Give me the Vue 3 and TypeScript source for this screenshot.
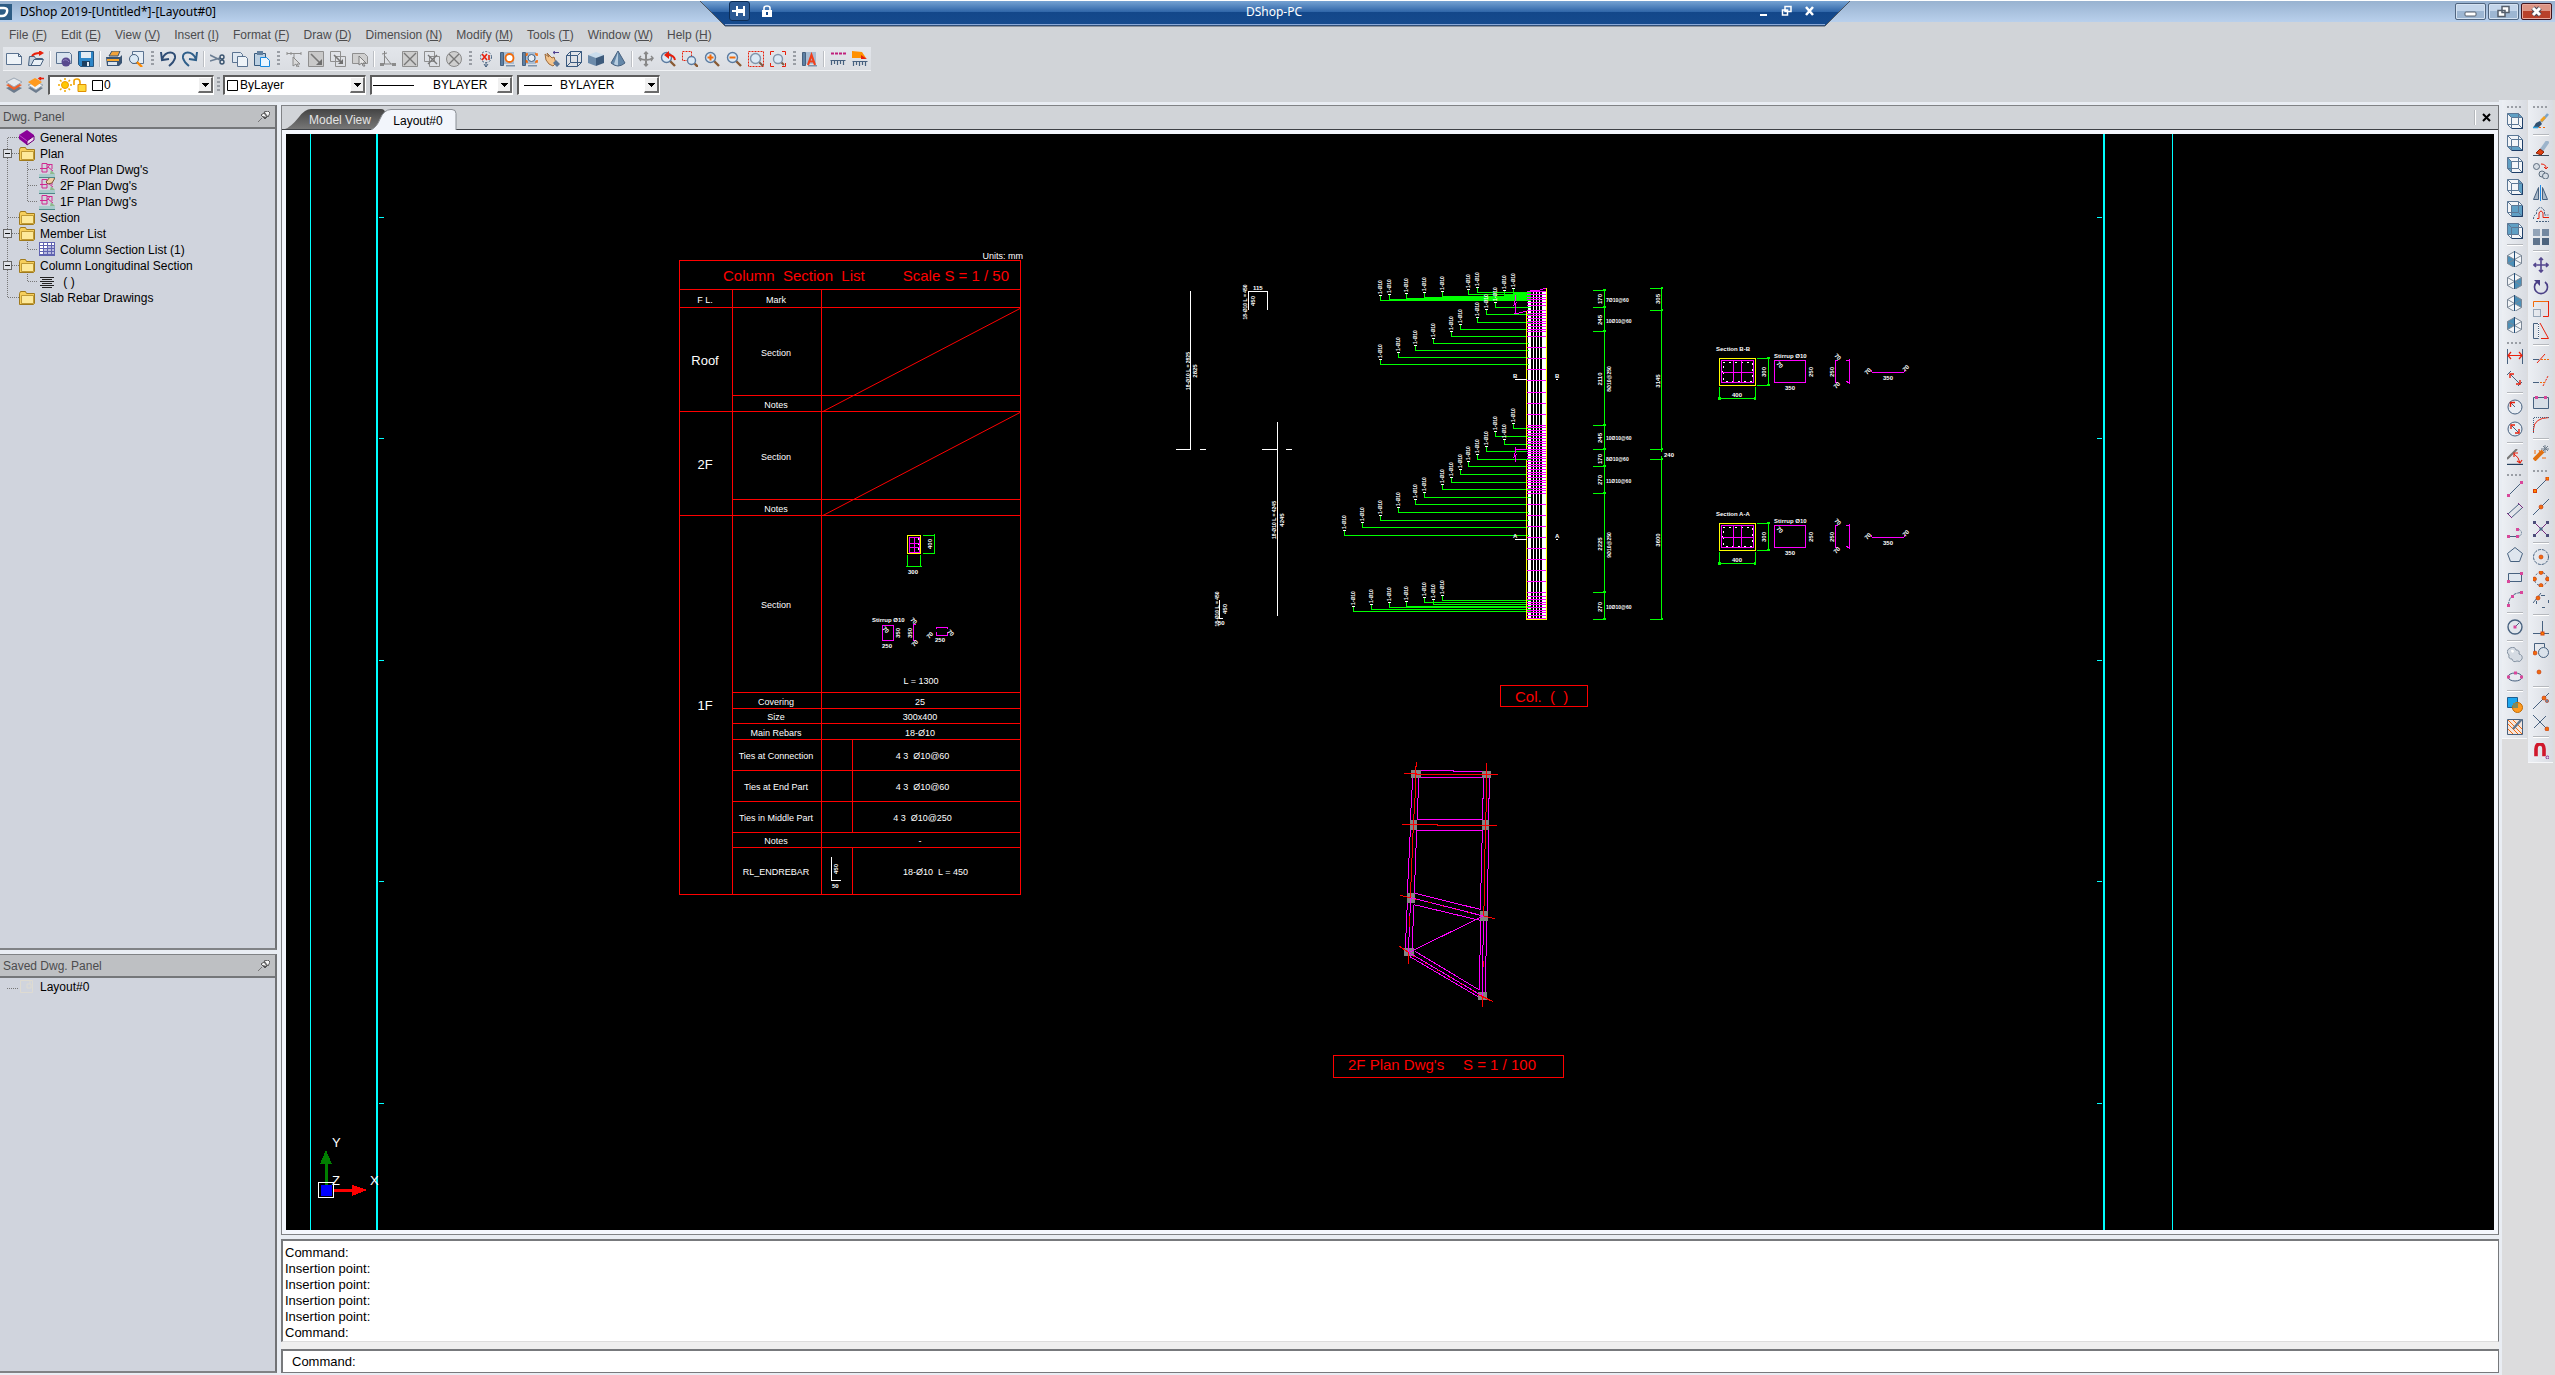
<script setup lang="ts">
interface Group { items: string[] }
interface TreeRow { label: string; icon: string; level: 0 | 1; open?: boolean; first?: boolean; last?: boolean; endOfBranch?: boolean }
interface Leader { x: number; y: number }

const steel = '#47617f'
const red = '#e8200c'
const orange = '#f26a0a'
const pink = '#d8479b'

const menus: [string, string][] = [
  ['File', 'F'], ['Edit', 'E'], ['View', 'V'], ['Insert', 'I'], ['Format', 'F'], ['Draw', 'D'],
  ['Dimension', 'N'], ['Modify', 'M'], ['Tools', 'T'], ['Window', 'W'], ['Help', 'H'],
]

const line = (d: string, c = steel, w = 1, extra = '') =>
  `<path d="${d}" fill="none" stroke="${c}" stroke-width="${w}" ${extra}/>`
const fill = (d: string, c: string, s = 'none') => `<path d="${d}" fill="${c}" stroke="${s}"/>`
const dot = (x: number, y: number, c = orange, r = 2) =>
  `<circle cx="${x}" cy="${y}" r="${r}" fill="${c}" stroke="#c33208" stroke-width=".6"/>`
const node = (x: number, y: number, c = pink) =>
  `<rect x="${x - 1.5}" y="${y - 1.5}" width="3" height="3" fill="${c}"/>`
const onode = (x: number, y: number) =>
  `<rect x="${x - 1.5}" y="${y - 1.5}" width="3" height="3" fill="#ff8a00" stroke="#d8400a"/>`

const cube = (face: string) =>
  fill('M.5.5h11l4 4v11h-11l-4-4z', '#f3f5f8') + fill(face, '#5f9fc4') +
  line('M.5.5h11v11h-11zM4.5 4.5h11v11h-11zM.5.5l4 4M11.5.5l4 4M11.5 11.5l4 4M.5 11.5l4 4', '#5c7896', 1) +
  line('M15.5 5v10.5H5', '#1e3e68')
const iso = (face: string) =>
  fill('M7.5.5l7 4v8l-7 4-7-4v-8z', '#f3f5f8') + fill(face, '#4c90b8') +
  line('M7.5.5l7 4v8l-7 4-7-4v-8zM.5 4.5l14 8M14.5 4.5l-14 8', '#7a8796') + line('M7.5 0v16', '#234e78')
const lens = (inner: string) =>
  line('M10 10l5 5', '#8a5a33', 2.4) + `<circle cx="6.5" cy="6.5" r="5" fill="#dbe9f5" stroke="#5b7ba0" stroke-width="1.4"/>` + inner
const sheet = (inner: string) =>
  fill('M.5 1.5h3v13h-3z', '#5d7fa3', '#47617f') + fill('M4 1h10v12H4z', '#a9bdd3') + fill('M6 14h9v1.500H6z', '#7d93ab') + inner

const icons: Record<string, string> = {
  new: fill('M.5 2.5h12l3 3v8H.5z', '#eef3f8', '#5b7391') + line('M12.5 2.5v3h3'),
  open: fill('M.5 14.5l1-9h5l1 2h7l-3 7z', '#c5d2e0', steel) + fill('M3 14.5l3-6h9.5l-3 6z', '#eaf0f6', steel) + line('M4 5c2-3 5-3 8-3', red, 2) + fill('M11-1l5 3-5 3z', red),
  cloud: fill('M.5 1.5h13l2 2v9H.5z', '#d9e4ef', '#5b7391') + `<circle cx="10" cy="11" r="4.5" fill="#5a4a8e"/>` + line('M7 10q3-3 6 1', '#9080c0'),
  save: fill('M.5.5h15v15h-13l-2-2z', '#2d86c8', '#27557f') + fill('M3 1h10v6H3z', '#e3ecf4') + fill('M4 10h8v5H4z', '#1c3e5f') + fill('M9 11h2v4H9z', '#e3ecf4'),
  print: fill('M3 5l3-5h8l-2 5z', '#f2a33a', '#37536f') + fill('M0 6h14l2-2v8l-3 3H1z', '#3a5473') + line('M1 9h12', '#f8a830', 2) + fill('M2 11h9v3H2z', '#d9e3ee'),
  preview: fill('M4.5.5h11v12h-11z', '#e5edf5', '#5b7391') + `<circle cx="6" cy="8" r="4.5" fill="#dbe9f5" stroke="#47617f"/>` + line('M9 11l5 5', '#ff8a00', 2.4),
  undo: line('M1 1l1 8 7-1M2 8C6-1 16 0 15 7q-1 4-6 8', '#2f4d75', 2),
  redo: line('M15 1l-1 8-7-1M14 8C10-1 0 0 1 7q1 4 6 8', '#2f5f8a', 2),
  cut: line('M0 4l10 5M0 10l10-3', '#6c7f95', 1.6) + line('M10 6a2 2 0 104 0 2 2 0 10-4 0M10 11a2 2 0 104 0 2 2 0 10-4 0', '#39536f', 1.4),
  copy: fill('M.5 1.5h8l2 2v8H.5z', '#dfe8f1', '#5b7391') + fill('M5.5 5.5h8l2 2v8h-10z', '#eef3f8', '#5b7391'),
  paste: fill('M.5 2.5h11v12H.5z', '#bcd0e2', '#37597c') + fill('M3 0h6v4H3z', '#62809f') + fill('M6.5 6.5h6l3 3v6h-9z', '#eaf5ff', '#1688e0'),
  gA: line('M1 2.5h14M8 2v6M1 1v3M5 1v3M15 1v3', '#8f8f8f') + fill('M7 6l7 7-3 0 2 3-2 0-1-3-3 2z', '#d9d9d9', '#8a8a8a'),
  gB: fill('M.5.5h15v15H.5z', '#c9c9c9', '#8f8f8f') + line('M3 3l9 9', '#777', 1.6) + fill('M14 14H8l6-6z', '#6f6f6f'),
  gC: line('M.5.5h10v10H.5zM5.5 5.5h10v10h-10z', '#8f8f8f') + line('M4 4l7 7', '#777', 1.6) + fill('M13 13H8l5-5z', '#6f6f6f'),
  gD: fill('M.5 2.5h12l3 3v7H.5z', '#cfcfcf', '#8f8f8f') + fill('M7 5l7 7-3 0 2 3-2 0-1-3-3 2z', '#e6e6e6', '#7d7d7d'),
  gE: line('M4.5 0v13M2 13h13M4 4l7 9M2 3l5-1', '#858585') + fill('M0 12h4v3H0zM12 12h4v3h-4z', '#8b8b8b'),
  gF: fill('M.5.5h15v15H.5z', '#cdcdcd', '#8f8f8f') + line('M2 2l12 12M14 2L2 14', '#777', 1.4),
  gG: line('M.5.5h10v10H.5zM5.5 5.5h10v10h-10z', '#8f8f8f') + line('M4 4l9 9M13 4l-9 9', '#777', 1.4),
  gH: `<circle cx="8" cy="8" r="7.5" fill="#cfcfcf" stroke="#8a8a8a"/>` + line('M3 3l10 10M13 3L3 13', '#777', 1.4),
  x1: `<circle cx="8" cy="6" r="5.5" fill="none" stroke="#47617f" stroke-dasharray="2 1.5"/>` + line('M8 11v5M6 13l2 3 2-3') + line('M4 3l5 6M9 3L4 9M11 4v5', red, 1.6),
  v1: sheet(`<circle cx="9.5" cy="7" r="4" fill="#fff" stroke="${orange}" stroke-width="1.8"/>`),
  v2: sheet(`<circle cx="9.5" cy="7" r="3.5" fill="#e8eef5" stroke="#47617f"/>` + line('M6 3H4.500v2M13 3h2v2M6 11H4.500V9M13 11h2V9', orange, 1.6)),
  hand: fill('M1 3l4 3-2-4 5 5 2-1 2 6-3 3-4-2-3-4z', '#f4c58e', '#9c6a3c') + fill('M9 12l3-3 4 4-3 3z', '#5a7596') + line('M15 1.5H9M11 0L9 1.5 11 3', '#4f3f8f'),
  box: line('M.5 4.5h11v11H.5zM4.5.5h11v11h-11zM.5 4.5l4-4M11.5 4.5l4-4M11.5 15.5l4-4M.5 15.5l4-4', '#39597f'),
  solid: fill('M0 4l8-3 8 3-8 3z', '#c9dcec') + fill('M0 4l8 3v8l-8-3z', '#6c8bab') + fill('M16 4l-8 3v8l8-3z', '#3e5b7c'),
  cone: fill('M8 0l7 12q-7 6-14 0z', '#6487a8', '#47617f') + fill('M8 1L4 13q3 2 4 1z', '#b7cde0'),
  orbit: line('M8 1v14M1 7q7 4 14 0', '#888', 2) + line('M6 3l2-2 2 2M6 13l2 2 2-2M3 5L1 7l2 3M13 5l2 2-2 3', '#888', 1.4),
  zPrev: lens('') + line('M15 9Q14 4 8 4', red, 2) + fill('M4 4l5-4v8z', red),
  zWin: line('M.5.5h9v9h-9z', red, 1, 'stroke-dasharray="2 1"') + line('M12 12l4 4', '#8a5a33', 2.4) + `<circle cx="9.5" cy="9.5" r="4" fill="#dbe9f5" stroke="#5b7ba0" stroke-width="1.4"/>`,
  zIn: lens(line('M3.5 6.5h6M6.5 3.5v6', orange, 2)),
  zOut: lens(line('M3.5 6.5h6', orange, 2)),
  zSel: line('M.5.5h15v15H.5z', red, 1, 'stroke-dasharray="2 1"') + line('M11 11l4 4', '#7a5a43', 2) + `<circle cx="7.5" cy="7.5" r="5" fill="#dbe9f5" stroke="#8095ab" stroke-width="1.4"/>`,
  zAll: line('M.5 4V.5H4M12 .5h3.5V4M15.5 12v3.5H12M4 15.5H.5V12', red) + line('M11 11l3 3', '#7a5a43', 2) + `<circle cx="8" cy="8" r="4.5" fill="#dbe9f5" stroke="#8095ab" stroke-width="1.4"/>`,
  txt: sheet(line('M6 14L9.5 4 13 14M7 10.5h5', '#f0401c', 2.2)),
  dist: line('M1 2.5h15', '#c0207c', 2, 'stroke-dasharray="3 1"') + line('M.5 9.5h15M1.5 9v5M4.5 9v4M7.5 9v5M10.5 9v4M13.5 9v5', steel, 1.2),
  area: fill('M0 0l10 1 4 6H0z', '#ff9100') + fill('M9 4l6 4H9z', red) + line('M.5 10.5h15M1.5 10v5M4.5 10v4M7.5 10v5M10.5 10v4M13.5 10v5', steel, 1.2),
  layers: fill('M0 11l8-3 8 3-8 5z', '#6c7b8d') + fill('M0 8l8-3 8 3-8 5z', '#f0602a') + fill('M0 5l8-4 8 4-8 5z', '#e5e9ee', '#9aa6b3'),
  layers2: fill('M0 11l8-3 7 3-7 5z', '#6c7b8d') + fill('M0 8l8-3 7 3-7 5z', '#f2f4f6', '#9aa6b3') + fill('M0 5l7-4 7 4-7 5z', '#ff9a1e') + line('M16 1.5h-5M13 0l-2 1.5L13 3', red, 1.4),
  brush: line('M15 1L8 9', '#7ca4c8', 2.6) + line('M12 4L8 8', '#f0a020', 2.6) + fill('M3 10l4-2 2 3-4 4-5 0z', '#31506f') + line('M0 14.5h5', '#2f9fd8', 1.6) + line('M6 14.5h8', orange, 1, 'stroke-dasharray="2 2"'),
  erase: line('M15 0L8 10', '#9db4cb', 4) + fill('M3 12l4-4 4 3-3 3z', '#e04010', '#8a2408') + line('M0 14.5h16', '#3b4b5c'),
  copyObj: `<circle cx="3.5" cy="3.5" r="3" fill="#d5dce4" stroke="#5d6d7e"/><circle cx="9" cy="11" r="3" fill="#d5dce4" stroke="#5d6d7e"/><circle cx="12.5" cy="13" r="3" fill="#d5dce4" stroke="#5d6d7e"/>` + line('M8 1q5 0 5 4M11 4l2 2 2-2', red),
  mirror: fill('M5.5 2.5v12h-5z', '#aab9c9', steel) + fill('M9.5 2.5v12h5z', '#aab9c9', steel) + line('M7.5 0v16', '#1e8ce8'),
  offset: line('M4 11.5h2V6q2-4 4 0v4.5h6', red) + line('M.5 12q0-4 3-5V4q4-7 8 0v4h4M3 14.5h13', steel, 1, 'stroke-dasharray="2 1"'),
  array: fill('M0 0h7v7H0z', '#93a4b8') + fill('M9 0h7v7H9z', '#7488a0') + fill('M0 9h7v7H0z', '#60758e') + fill('M9 9h7v7H9z', '#4d637d'),
  move: line('M8 1v14M1 8h14M6 3l2-2 2 2M6 13l2 2 2-2M3 6L1 8l2 2M13 6l2 2-2 2', '#54478e', 1.6),
  rotate: line('M4 3a6.5 6.5 0 108 0', '#4a3f86', 1.6) + fill('M1 1h6v6z', '#4a3f86'),
  scale: fill('M8 8V1h7v14h-6V8z', '#e4e0e4') + line('M.5 6V.5h15', orange) + line('M15.500 0v15.5H10', red) + line('M.5 8.5h7v7h-7z', steel, 1, 'stroke-dasharray="1 1"'),
  stretch: line('M.5.5h5v15h-5z', steel) + line('M7 0l8.5 15.5H8', red) + line('M5.5 0v16', '#fff', 1, 'stroke-dasharray="1 1"'),
  trim: line('M4 12L12 3', red) + line('M0 8.5h6', steel) + line('M8 8.5h8', orange, 1, 'stroke-dasharray="2 1"'),
  extend: line('M10 13l5-10', red, 1, 'stroke-dasharray="2 1"') + line('M0 9.5h6', steel) + line('M7 9.5h5', orange, 1, 'stroke-dasharray="2 1"'),
  brk: fill('M.5 2.5h15v11H.5z', '#d7dee7', steel) + node(3.5, 2.5) + node(12.5, 2.5),
  fillet: line('M.5 16V12Q1 1 16 .5', red) + line('M.5 16V1M1 .5h15', steel, 1, 'stroke-dasharray="1 1"'),
  explode: line('M1 15L10 6', '#e07010', 4) + line('M12 0v8M8 4h8M10 1l5 5M15 1l-5 5', '#6e7c8c') + line('M2 5v4M9 13h4M6 5l1 2', orange),
  dLin: line('M.5 0v15M15.5 0v15', steel) + line('M1 6.5h14M4 3L1 6.5 4 10M12 3l3 3.5L12 10', red, 1.2),
  dAli: line('M0 4L4 0M11 15l4-4', steel) + line('M3 3l10 10', steel) + line('M3 7V3h4M9 13h4V9', red, 1.4),
  dRad: `<circle cx="8" cy="8" r="7" fill="#e8edf3" stroke="${steel}"/>` + line('M8 8L3.5 3.5', steel) + line('M3.5 8V3.5H8', red, 1.4),
  dDia: `<circle cx="8" cy="8" r="7" fill="#e8edf3" stroke="${steel}"/>` + line('M4 4l8 8', steel) + line('M4 8V4h4M8 12h4V8', red, 1.4),
  dAng: line('M0 10L10 0', '#777', 2) + line('M0 15.5h16', '#26405e', 1.4) + line('M7 5q5 3 6 9', red) + line('M7 8V4h4M10 12l3 2 2-3', red, 1.2),
  pLine: line('M2 14L14 2') + node(1.5, 14.5) + node(14.5, 1.5),
  pDbl: line('M1 11L12 1M4 15L15 5') + line('M0 10l5 5M11 0l5 5', '#7a2a80'),
  pPoly: line('M2 11.5h8') + line('M10 4q6 1 4 6l-3 2', steel, 1, 'stroke-dasharray="1 1"') + node(1.5, 11.5) + node(10.5, 11.5) + node(10.5, 4.5),
  pPent: fill('M8 .5l7.5 6-3 8h-9l-3-8z', '#dfe6ee', steel),
  pRect: fill('M1.5 4.5h13v8h-13z', '#dfe6ee', steel) + node(1.5, 12.5) + node(14.5, 4.5),
  pArc: line('M1.5 14Q2 2 15 1.5', steel, 1, 'stroke-dasharray="3 1"') + node(1.5, 14.5) + node(5.5, 5.5) + node(14.5, 1.5),
  pCir: `<circle cx="8" cy="8" r="7" fill="#e1e6ec" stroke="${steel}" stroke-width="1.4"/>` + line('M8 8l4-4') + node(8, 8),
  pCloud: fill('M3 1q5-2 6 2 4 0 3 4 4 1 3 5-2 4-5 2-4 2-5-2-4 0-3-4Q-2 4 3 1z', '#d5dbe3', '#8593a3') + fill('M4 3q3-1 3 2-3 2-3-2z', '#fff'),
  pEll: `<ellipse cx="8" cy="8" rx="7" ry="4" fill="#e8ecf1" stroke="${steel}"/>` + node(1.5, 8) + node(14.5, 8) + node(8.5, 4),
  region: fill('M.5.5h10v10H.5z', '#1ea7ee', '#1a5f94') + `<circle cx="10.5" cy="10.5" r="5" fill="#ff9a1e" stroke="#c06a00"/>` + fill('M6 6h5v5H6z', '#7e8a62'),
  hatch: fill('M.5.5h15v15H.5z', '#f4e4dc', steel) + line('M1 5l10 10M1 10l5 5M1 1l14 14M6 1l9 9', orange) + line('M15 0L6 10', '#5f7690', 2.4),
  sEnd: line('M2 14L14 2') + onode(2, 14) + onode(14.5, 1.5),
  sMid: line('M0 16L16 0') + dot(8, 8),
  sInt: line('M1 1l14 14M15 1L1 15', '#7a2a80') + node(1.5, 1.5, '#4d4d7a') + node(14.5, 1.5, '#4d4d7a') + node(1.5, 14.5, '#4d4d7a') + node(14.5, 14.5, '#4d4d7a') + node(8, 8, '#4d6a8a'),
  sCen: `<circle cx="8" cy="8" r="7.5" fill="none" stroke="${steel}" stroke-dasharray="3 1"/>` + dot(8, 8),
  sQua: `<circle cx="8" cy="8" r="6.5" fill="none" stroke="${steel}" stroke-dasharray="2 2"/>` + dot(8, 1.5) + dot(14.5, 8) + dot(8, 14.5) + dot(1.5, 8),
  sTan: line('M0 10L8 0', steel) + line('M8 2.5h4M15.5 7v3M9 14.5h3M3.5 8v3') + dot(5, 5),
  sPer: line('M9.5 0v13M0 12.5h16') + onode(9.5, 12.5),
  sIns: line('M1.5 10V.5h10V4', steel) + `<circle cx="10.5" cy="9.5" r="5" fill="#dbe3ec" stroke="${steel}"/>` + dot(2, 10),
  sNod: dot(6, 7),
  sNea: line('M0 16L16 0') + dot(11, 5) + dot(14, 8, '#6f89a5', 1.6),
  sApp: line('M0 0l14 14M13 1L1 13') + dot(14, 14),
  magnet: line('M3 15V6q0-5 4-5t4 5v8', '#d0182c', 3.6) + line('M1 14.5h4M9 14.5h4', '#e9edf2', 2.6) + `<circle cx="14.5" cy="14.5" r="1.5" fill="none" stroke="#8a2a90"/>`,
  book: fill('M0 5l8-5 7 5 0 5-7 5-8-6z', '#8a0098') + fill('M8 11l7-5v4l-7 5z', '#f0d8f2', '#6c0078') + line('M0 5l8 6', '#c04ccc'),
  folder: fill('M.5 3.5l1-2h5l1 2h8v10l-1 1H.5z', '#f6cf5c', '#a07a1c') + fill('M2.5 5.5h12v8h-12z', '#fde99a', '#c09a35'),
  plan: fill('M0 12h16v3H0z', '#a9cccc') + line('M0 15.5h16', '#4c8888') + fill('M12 8l4 4h-5z', '#8db88d') + line('M3 10V1.5h5V10zM1 6.5h7M8 2.500h5M11 2.500L8 6M9 5l5 4M13 2v5', '#d02890', 1),
  table: fill('M0 0h16v14H0z', '#5f62b0') + fill('M1 1h3v2H1zM5 1h3v2H5zM9 1h3v2H9zM13 1h2v2h-2zM1 4h3v2H1zM5 4h3v2H5zM1 7h3v2H1zM1 10h3v2H1z', '#fff') + fill('M9 4h3v2H9zM13 4h2v2h-2zM5 7h3v2H5zM9 7h3v2H9zM13 7h2v2h-2zM5 10h3v2H5zM9 10h3v2H9zM13 10h2v2h-2z', '#b9bbe0'),
  bars: line('M1 3.5h14M3 5.5h10M1 7.5h14M3 9.5h10M1 11.5h14M3 13.5h10', '#222'),
  ghost: line('M1.5 1.5h12v12h-12zM8 5h4v4H8zM11 2v3', '#dedbd2'),
}
icons.planHand = icons.plan + fill('M7 4l4-5 5 1-3 5-4 1z', '#f0cfa4', '#7d5838')
;[
  'M.5.5h11l4 4h-11z', 'M.5 11.5h11l4 4h-11z', 'M.5.5l4 4v11l-4-4z',
  'M11.5.5l4 4v11l-4-4z', 'M4.5 4.5h11v11h-11z', 'M.5.5h11v11H.5z',
].forEach((f, i) => { icons['cube' + i] = cube(f) })
;['M.5 4.5l7 4v8l-7-4z', 'M14.5 4.5l-7 4v8l7-4z', 'M7.5.5l7 4v8l-7-4z', 'M7.5.5l-7 4v8l7-4z']
  .forEach((f, i) => { icons['iso' + i] = iso(f) })

const toGroups = (s: string): Group[] => s.split('/').map(g => ({ items: g.trim().split(/\s+/) }))
const topBars = toGroups('new open | cloud save | print preview / undo redo | cut copy paste / gA gB gC gD | gE gF gG gH / x1 v1 v2 hand box solid cone | orbit zPrev zWin zIn zOut zSel zAll / txt | dist area')
const sideBars = [
  toGroups('cube0 cube1 cube2 cube3 cube4 cube5 | iso0 iso1 iso2 iso3 / dLin dAli | dRad dDia | dAng / pLine pDbl pPoly pPent pRect pArc | pCir | pCloud pEll | region hatch'),
  toGroups('brush | erase copyObj mirror offset array | move rotate scale stretch | trim extend brk fillet | explode / sEnd sMid sInt | sCen sQua sTan | sPer sIns sNod | sNea sApp | magnet'),
]

const tree: TreeRow[] = [
  { label: 'General Notes', icon: 'book', level: 0, first: true },
  { label: 'Plan', icon: 'folder', level: 0, open: true },
  { label: "Roof Plan Dwg's", icon: 'plan', level: 1 },
  { label: "2F Plan Dwg's", icon: 'planHand', level: 1 },
  { label: "1F Plan Dwg's", icon: 'plan', level: 1, endOfBranch: true },
  { label: 'Section', icon: 'folder', level: 0 },
  { label: 'Member List', icon: 'folder', level: 0, open: true },
  { label: 'Column Section List (1)', icon: 'table', level: 1, endOfBranch: true },
  { label: 'Column Longitudinal Section', icon: 'folder', level: 0, open: true },
  { label: ' ( )', icon: 'bars', level: 1, endOfBranch: true },
  { label: 'Slab Rebar Drawings', icon: 'folder', level: 0, last: true },
]
const guide = (r: TreeRow) => {
  let d = `M7.5 ${r.first ? 8 : 0}V${r.last ? 8 : 16}`
  if (r.level === 0) d += 'M8 7.5H19'
  else d += `M27.5 0V${r.endOfBranch ? 8 : 16}M28 7.5H38`
  return d
}

const history = ['Command:', 'Insertion point:', 'Insertion point:', 'Insertion point:', 'Insertion point:', 'Command:']

const pts = (s: string): Leader[] => s.split(' ').map(p => { const [x, y] = p.split(',').map(Number); return { x, y } })
const leaders = pts('1380,300 1389,299 1406,298 1424,297 1442,296 1468,294 1477,292 1513,293 1504,295 1495,307 1486,314 1477,322 1460,329 1451,336 1433,343 1415,350 1398,357 1380,364 1513,428 1495,436 1504,444 1486,451 1477,459 1468,466 1460,474 1451,482 1442,489 1424,497 1415,504 1398,512 1380,520 1362,527 1344,535 1442,600 1424,602 1433,604 1406,606 1389,607 1371,609 1353,611')
const ties = [291, 294, 297, 299, 302, 305, 310, 313, 315, 318, 321, 323, 326, 329, 331, 336, 347, 358, 369, 380, 392, 403, 414, 425, 427, 430, 433, 435, 438, 441, 443, 446, 449, 451, 453, 456, 458, 461, 464, 466, 469, 472, 474, 477, 480, 482, 485, 488, 490, 493, 504, 515, 526, 537, 548, 559, 570, 581, 592, 596, 599, 602, 604, 607, 610, 612, 615, 618]
const dimA = [290, 307, 331, 425, 449, 466, 493, 592, 619]
const dimB = [288, 310, 449, 459, 619]
const dimText: [number, number, string][] = [
  [1602, 299, '170'], [1602, 320, '245'], [1602, 379, '2110'], [1602, 438, '245'], [1602, 459, '170'], [1602, 480, '270'],
  [1602, 544, '2225'], [1602, 607, '270'], [1611, 379, '8Ø10@250'], [1611, 545, '9Ø10@250'],
  [1660, 299, '305'], [1660, 381, '3145'], [1660, 540, '3600'],
  [1190, 371, '18-Ø10 L = 2825'], [1197, 371, '2825'], [1276, 520, '18-Ø10 L = 4245'], [1284, 520, '4245'],
  [1247, 302, '18-Ø10 L = 450'], [1255, 301, '450'], [1219, 609, '18-Ø10 L = 450'], [1227, 609, '450'],
]
const tieText: [number, string][] = [[300, '7Ø10@60'], [321, '10Ø10@60'], [438, '10Ø10@60'], [459, '8Ø10@60'], [481, '11Ø10@60'], [607, '10Ø10@60']]
const sections: [string, number][] = [['Section B-B', 0], ['Section A-A', 165]]
const ticks = [217, 438, 660, 881, 1103]
const boxes: [number, number, number, number][] = [
  [273, 330, 30, 24], [486, 333, 27, 21], [270, 480, 21, 30], [486, 480, 21, 30],
  [261, 699, 24, 30], [480, 753, 24, 30], [252, 864, 30, 24], [474, 996, 27, 24],
]
</script>

<template>
  <div class="app">
    <header class="titlebar">
      <svg class="logo" width="12" height="16" viewBox="0 0 12 16"><path d="M0 0h12v16H0z" fill="#2d5c85" /><path d="M0 4h4q4 0 3 4t-5 4H0" fill="none" stroke="#fff" stroke-width="2.5" /></svg>
      <h1>DShop 2019-[Untitled*]-[Layout#0]</h1>
      <div class="winbtns">
        <button aria-label="Minimize"><svg width="29" height="15"><rect x="9" y="8" width="11" height="4" rx="1" fill="#fff" stroke="#555f6c" /></svg></button>
        <button aria-label="Restore"><svg width="29" height="15"><path d="M13 2.5h7v6h-7zM9 6.5h7v6H9z" fill="#fff" stroke="#555f6c" stroke-width="1.5" /></svg></button>
        <button class="close" aria-label="Close"><svg width="29" height="15"><path d="M11 4l7 7M18 4l-7 7" stroke="#4a4a58" stroke-width="5" /><path d="M11 4l7 7M18 4l-7 7" stroke="#fff" stroke-width="3" /></svg></button>
      </div>
      <div class="banner">
        <svg class="shape" width="1150" height="27" viewBox="0 0 1150 27">
          <defs><linearGradient id="bn" x1="0" y1="0" x2="0" y2="1"><stop offset="0" stop-color="#76a3d3" /><stop offset=".44" stop-color="#2f65a8" /><stop offset=".45" stop-color="#13478a" /><stop offset="1" stop-color="#164b8e" /></linearGradient></defs>
          <path d="M0 1h1150l-25 25H25z" fill="url(#bn)" />
          <path d="M0 1l25 25h1100l25-25" fill="none" stroke="#4d5560" />
          <path d="M25 24.5h1100" stroke="#8aa9d8" />
        </svg>
        <button class="bb pin" aria-label="Pin"><svg width="14" height="12" viewBox="0 0 14 12"><path d="M0 6h5M5 1v10M5 6h6M12 1v10" stroke="#fff" stroke-width="2" /><path d="M6 4h5v4H6z" fill="#fff" /></svg></button>
        <button class="bb" aria-label="Lock"><svg width="12" height="12" viewBox="0 0 12 12"><path d="M1 5h10v7H1z" fill="#fff" /><path d="M3 6V3q0-2 3-2t3 2v3" fill="none" stroke="#fff" stroke-width="1.6" /><path d="M5 7h2v3H5z" fill="#13478a" /></svg></button>
        <span class="host">DShop-PC</span>
        <button class="bb" aria-label="Minimize session"><svg width="12" height="12"><path d="M2 9h7v2H2z" fill="#fff" /></svg></button>
        <button class="bb" aria-label="Restore session"><svg width="12" height="12"><path d="M4 1.5h6v5H4zM1.5 5h5v5h-5z" fill="none" stroke="#fff" stroke-width="1.5" /></svg></button>
        <button class="bb" aria-label="Close session"><svg width="12" height="12"><path d="M2 2l7 8M9 2l-7 8" stroke="#fff" stroke-width="2.5" /></svg></button>
      </div>
    </header>

    <nav class="menu">
      <button v-for="m in menus" :key="m[0]">{{ m[0] }} (<u>{{ m[1] }}</u>)</button>
    </nav>

    <div class="bars">
      <div v-for="(g, gi) in topBars" :key="gi" class="bar">
        <i v-if="gi > 0" class="grip" />
        <template v-for="(n, ni) in g.items" :key="ni">
          <i v-if="n === '|'" class="sep" />
          <button v-else class="tool" :aria-label="n"><svg width="16" height="16" viewBox="0 0 16 16" v-html="icons[n]" /></button>
        </template>
      </div>
    </div>

    <div class="props">
      <button class="tool" aria-label="Layers"><svg width="16" height="16" viewBox="0 0 16 16" v-html="icons.layers" /></button>
      <button class="tool" aria-label="Previous layer"><svg width="16" height="16" viewBox="0 0 16 16" v-html="icons.layers2" /></button>
      <div class="combo layer">
        <svg width="45" height="15" viewBox="0 0 45 15">
          <circle cx="7" cy="7" r="3.5" fill="#ffc800" stroke="#f09a00" /><path d="M7 0v2M7 12v2M0 7h2M12 7h2M2 2l1.5 1.5M10.5 10.5L12 12M12 2l-1.5 1.5M2 12l1.5-1.5" stroke="#f0a800" stroke-width="1.5" />
          <path d="M16 7V3q0-2 3-2t3 3v3" fill="none" stroke="#f0a000" stroke-width="1.6" /><path d="M20 6.5h8v7h-8z" fill="#ffd93a" stroke="#e09000" />
          <path d="M34.5 2.5h10v10h-10z" fill="#fff" stroke="#000" />
        </svg>
        <select aria-label="Layer"><option>0</option></select>
      </div>
      <i class="grip" />
      <div class="combo color">
        <svg width="11" height="11" viewBox="0 0 11 11"><path d="M.5.5h10v10H.5z" fill="#fff" stroke="#000" /></svg>
        <select aria-label="Color"><option>ByLayer</option></select>
      </div>
      <div class="combo ltype">
        <svg width="41" height="11" viewBox="0 0 41 11"><path d="M0 5.5h41" stroke="#000" /></svg>
        <select aria-label="Line type"><option>BYLAYER</option></select>
      </div>
      <div class="combo lweight">
        <svg width="28" height="11" viewBox="0 0 28 11"><path d="M0 5.5h28" stroke="#000" /></svg>
        <select aria-label="Line weight"><option>BYLAYER</option></select>
      </div>
    </div>

    <div class="body">
      <aside class="side">
        <section class="panel grow">
          <h2>Dwg. Panel<svg width="12" height="12" viewBox="0 0 12 12"><path d="M0 11l4-4" stroke="#777" /><path d="M3 4l4 4 2-2-3-4zM6 1l4-1 2 2-2 4z" fill="#f4f4f4" stroke="#555" /><path d="M4 5l3 3 2-2z" fill="#555" /></svg></h2>
          <ul class="tree">
            <li v-for="r in tree" :key="r.label">
              <svg :width="r.level ? 39 : 19" height="16">
                <path :d="guide(r)" fill="none" stroke="#777" stroke-dasharray="1 1" />
                <g v-if="r.open"><rect x="3.5" y="3.5" width="8" height="8" fill="#dfe2e8" stroke="#666" /><path d="M5 7.5h5" stroke="#111" /></g>
              </svg>
              <svg width="16" height="16" viewBox="0 0 16 16" v-html="icons[r.icon]" />
              <span>{{ r.label }}</span>
            </li>
          </ul>
        </section>
        <section class="panel saved">
          <h2>Saved Dwg. Panel<svg width="12" height="12" viewBox="0 0 12 12"><path d="M0 11l4-4" stroke="#777" /><path d="M3 4l4 4 2-2-3-4zM6 1l4-1 2 2-2 4z" fill="#f4f4f4" stroke="#555" /><path d="M4 5l3 3 2-2z" fill="#555" /></svg></h2>
          <ul class="tree">
            <li>
              <svg width="19" height="16"><path d="M7 9.5H19" stroke="#777" stroke-dasharray="1 1" /></svg>
              <svg width="16" height="16" viewBox="0 0 16 16" v-html="icons.ghost" />
              <span>Layout#0</span>
            </li>
          </ul>
        </section>
      </aside>

      <main class="work">
        <section class="doc">
          <div class="tabs">
            <button class="tab model"><svg width="100" height="20" viewBox="0 0 100 20"><defs><linearGradient id="tb" x1="0" y1="0" x2="0" y2="1"><stop offset="0" stop-color="#444" /><stop offset="1" stop-color="#777" /></linearGradient></defs><path d="M0 20Q6 18 14 8 20 0 26 0h70q4 0 4 4v16z" fill="url(#tb)" /></svg><span>Model View</span></button>
            <button class="tab layout"><svg width="86" height="21" viewBox="0 0 86 21"><path d="M0 21Q6 18 9 10 13 .5 20 .5h61q4 0 4 4V21" fill="#f2f5fb" stroke="#8a8e94" /></svg><span>Layout#0</span></button>
            <button class="tabclose" aria-label="Close drawing"><svg width="9" height="9" viewBox="0 0 9 9"><path d="M1 1l7 7M8 1L1 8" stroke="#000" stroke-width="2" /></svg></button>
          </div>
          <div class="canvas">
            <svg class="drawing" width="100%" height="100%">
              <g transform="translate(-286 -134)" shape-rendering="crispEdges" fill="none">
                <g fill="#0ff">
                  <rect x="310" y="134" width="1" height="100%" /><rect x="376" y="134" width="2" height="100%" />
                  <rect x="2103" y="134" width="2" height="100%" /><rect x="2172" y="134" width="1" height="100%" />
                  <g v-for="t in ticks" :key="t"><rect x="379" :y="t" width="5" height="1" /><rect x="2097" :y="t" width="5" height="1" /></g>
                </g>

                <g stroke="#fff">
                  <path d="M1190 291v158M1176 449h15M1200 449h6M1277 422v194M1262 449h15M1286 449h6M1248 310v-19h19v19M1219 600v18h4" />
                </g>
                <g fill="#fff">
                  <rect x="1528" y="291" width="3" height="327" /><rect x="1533" y="291" width="1" height="327" /><rect x="1536" y="291" width="1" height="327" />
                  <rect x="1539" y="291" width="1" height="327" /><rect x="1542" y="291" width="4" height="327" />
                </g>
                <g stroke="#0f0"><path v-for="(l, i) in leaders" :key="i" :d="`M${l.x} ${l.y - 5}V${l.y}H${l.y > 340 && l.y < 365 || l.y > 500 && l.y < 540 ? 1529 : 1531}`" /></g>
                <g stroke="#fff"><path v-for="(l, i) in leaders" :key="i" :d="`M${l.x - 1} ${l.y - 5}h3`" /></g>
                <g stroke="#f0f">
                  <path v-for="t in ties" :key="t" :d="`M1527 ${t}h19`" />
                  <path d="M1527 292l7-2 6 0 6-2M1515 295v6l-1 4 2-2-1 10h4l8-2M1515 447v6l-1 4 2-2-1 7M1515 449h12" />
                </g>
                <path d="M1526 311v138M1526 460v159h20V288" stroke="#ff0" />
                <path d="M1515 379h12M1515 539h12M1556 379h2M1556 539h2" stroke="#fff" />

                <g stroke="#0f0">
                  <path d="M1604 289v331M1661 287v165M1661 456v164" />
                  <path v-for="t in dimA" :key="t" :d="`M1593 ${t}h12`" /><path v-for="t in dimB" :key="'b' + t" :d="`M1650 ${t}h12`" />
                </g>
                <g fill="#0f0"><rect v-for="t in dimA" :key="t" x="1603" :y="t - 1" width="3" height="2" /><rect v-for="t in dimB" :key="'b' + t" x="1661" :y="t - 1" width="2" height="2" /></g>

                <g v-for="s in sections" :key="s[0]" :transform="`translate(0 ${s[1]})`">
                  <rect x="1719" y="358" width="36" height="27" stroke="#ff0" />
                  <path d="M1723 362h29v19h-29zM1722 371v2M1753 371v2" stroke="#fff" stroke-dasharray="2 4" />
                  <path d="M1721 360h32v22h-32zM1733 360v22M1741 360v22M1721 372h32M1774 360h31v22h-31zM1838 361l-3-1v22l3 1M1846 361l3-1v23l-3-2M1871 370l1 2h32l1-2" stroke="#f0f" />
                  <path d="M1757 358h12M1757 385h12M1768 357v29M1719 387v12M1755 387v12M1718 398h38" stroke="#0f0" />
                  <g fill="#0f0"><rect x="1767" y="357" width="3" height="2" /><rect x="1767" y="384" width="3" height="2" /><rect x="1718" y="397" width="3" height="3" /><rect x="1754" y="397" width="2" height="3" /></g>
                  <g class="tiny">
                    <text class="cap" x="1716" y="351">{{ s[0] }}</text><text class="cap" x="1774" y="358">Stirrup Ø10</text>
                    <text class="num" x="1732" y="397">400</text><text class="num" x="1785" y="390">350</text><text class="num" x="1883" y="380">350</text>
                    <text class="num" transform="translate(1766 377) rotate(-90)">300</text><text class="num" transform="translate(1813 377) rotate(-90)">250</text><text class="num" transform="translate(1834 377) rotate(-90)">250</text>
                    <text class="num" transform="translate(1776 364) rotate(45)">70</text><text class="num" transform="translate(1834 356) rotate(45)">70</text><text class="num" transform="translate(1836 389) rotate(-45)">70</text>
                    <text class="num" transform="translate(1867 375) rotate(-45)">70</text><text class="num" transform="translate(1905 372) rotate(-45)">70</text>
                  </g>
                </g>

                <rect x="1500" y="685" width="87" height="21" stroke="#f00" />
                <rect x="1333" y="1055" width="230" height="22" stroke="#f00" />
                <g transform="translate(1320 660) scale(.33333333)" stroke-width="3">
                  <rect v-for="(b, i) in boxes" :key="i" :x="b[0]" :y="b[1]" :width="b[2]" :height="b[3]" fill="#848484" />
                  <path stroke="#f0f" d="M303 331H399L400 334H486M303 352H486M292 478H486M289 511H486M278 354L271 480M296 354L292 478M491 354L487 480M509 354L505 480M271 511L262 699M290 511L283 699M487 511L481 750M506 511L502 753M285 700L480 748M273 713L490 768M282 734L480 781M262 729L256 864M272 715L265 878M281 734L277 866M265 878L400 812 490 768M482 783L478 990M490 783L487 1008M500 783L496 996M285 874L478 990M267 878L487 1008M270 890L474 1010" />
                  <path stroke="#f00" d="M252 340H288V343H534M246 493H351V496H531M290 306V318L286 320V400L280 495 275 620 271 714M500 309V420L496 495 493 725 490 768M240 706L273 714M492 768L525 776M237 858L267 878M265 878V912M487 1008V1041M474 1003L519 1025M268 768V800M490 904V920" />
                  <path stroke="#f00" stroke-dasharray="7 34" d="M285 717L480 766M280 888L474 1002" />
                </g>

                <path d="M326 1164v21" stroke="#008000" stroke-width="3" /><path d="M326 1150l6 14h-12z" fill="#008000" />
                <path d="M333 1190h20" stroke="#f00" stroke-width="3" /><path d="M352 1185l15 5-15 6z" fill="#f00" />
                <rect x="318" y="1182" width="15" height="15" stroke="#fff" /><rect x="321" y="1185" width="11" height="11" fill="#00f" />
              </g>
              <g transform="translate(-286 -134)">
                <g class="tiny">
                  <text v-for="(l, i) in leaders" :key="i" :transform="`translate(${l.x + 2} ${l.y - 6}) rotate(-90)`">1-Ø10</text>
                  <text v-for="(t, i) in dimText" :key="'d' + i" :class="['mid', { num: t[2].length < 5 }]" :transform="`translate(${t[0]} ${t[1]}) rotate(-90)`">{{ t[2] }}</text>
                  <text v-for="(t, i) in tieText" :key="'t' + i" x="1606" :y="t[0] + 2">{{ t[1] }}</text>
                  <text class="num" x="1664" y="457">240</text><text class="num" x="1253" y="290">115</text><text class="num" x="1218" y="625">50</text>
                  <text class="num" x="1513" y="378">B</text><text class="num" x="1555" y="378">B</text><text class="num" x="1513" y="538">A</text><text class="num" x="1555" y="538">A</text>
                </g>
                <g class="axis"><text x="332" y="1147">Y</text><text x="332" y="1185">Z</text><text x="370" y="1185">X</text></g>
                <g class="cadtitle"><text x="1515" y="702">Col.&nbsp; (&nbsp; )</text><text x="1348" y="1070">2F Plan Dwg's</text><text x="1463" y="1070">S = 1 / 100</text></g>
              </g>
            </svg>

            <div class="sched">
              <p>Units: mm</p>
              <table>
                <colgroup><col class="c1"><col class="c2"><col class="c3"><col class="c4"></colgroup>
                <tbody>
                  <tr class="h29"><th colspan="4"><span class="ttl">Column&nbsp; Section&nbsp; List</span><span class="ttl">Scale S = 1 / 50</span></th></tr>
                  <tr class="h18"><td>F L.</td><td>Mark</td><td colspan="2" /></tr>
                  <tr class="h88"><td rowspan="2" class="fl">Roof</td><td>Section</td><td colspan="2" class="rel"><svg class="diag" width="199" height="104"><path d="M0 104L199 0" stroke="#f00" /></svg></td></tr>
                  <tr class="h16"><td>Notes</td><td colspan="2" /></tr>
                  <tr class="h88"><td rowspan="2" class="fl">2F</td><td>Section</td><td colspan="2" class="rel"><svg class="diag" width="199" height="104"><path d="M0 104L199 0" stroke="#f00" /></svg></td></tr>
                  <tr class="h16"><td>Notes</td><td colspan="2" /></tr>
                  <tr class="h177">
                    <td rowspan="9" class="fl">1F</td><td>Section</td>
                    <td colspan="2" class="detail">
                      <svg width="198" height="159" viewBox="822 516 198 159">
                        <g fill="none" shape-rendering="crispEdges">
                          <path d="M909 538v15M918 538v15" stroke="#fff" stroke-dasharray="2 3" />
                          <path d="M909 537h10v15h-10zM914 537v16M909 543h10M909 547h10M882 625h11v15h-11zM916 624l-3 1v15l3 1M936 629v-2h11v2M936 632v3h11v-3" stroke="#f0f" />
                          <path d="M907 535h13v18h-13z" stroke="#ff0" />
                          <path d="M923 535h12M923 553h12M934 534v20M907 555v12M920 555v12M906 566h16" stroke="#0f0" />
                        </g>
                        <g class="tiny">
                          <text class="num" x="908" y="574">300</text><text class="cap" x="872" y="622">Stirrup Ø10</text><text class="num" x="882" y="648">250</text><text class="num" x="935" y="642">250</text>
                          <text class="num" transform="translate(932 549) rotate(-90)">400</text><text class="num" transform="translate(900 638) rotate(-90)">350</text><text class="num" transform="translate(912 638) rotate(-90)">350</text>
                          <text class="num" transform="translate(882 629) rotate(45)">70</text><text class="num" transform="translate(910 620) rotate(45)">70</text><text class="num" transform="translate(914 647) rotate(-45)">70</text>
                          <text class="num" transform="translate(929 639) rotate(-45)">70</text><text class="num" transform="translate(947 632) rotate(45)">70</text>
                        </g>
                      </svg>
                      <div>L = 1300</div>
                    </td>
                  </tr>
                  <tr class="h16"><td>Covering</td><td colspan="2">25</td></tr>
                  <tr class="h15"><td>Size</td><td colspan="2">300x400</td></tr>
                  <tr class="h16"><td>Main Rebars</td><td colspan="2">18-Ø10</td></tr>
                  <tr class="h31"><td>Ties at Connection</td><td /><td class="spec">4 3&nbsp; Ø10@60</td></tr>
                  <tr class="h31"><td>Ties at End Part</td><td /><td class="spec">4 3&nbsp; Ø10@60</td></tr>
                  <tr class="h31"><td>Ties in Middle Part</td><td /><td class="spec">4 3&nbsp; Ø10@250</td></tr>
                  <tr class="h15"><td>Notes</td><td colspan="2">-</td></tr>
                  <tr class="h47">
                    <td>RL_ENDREBAR</td>
                    <td><svg width="16" height="34"><path d="M3 2v23h10" fill="none" stroke="#fff" shape-rendering="crispEdges" /><g class="tiny"><text class="num" transform="translate(10 19) rotate(-90)">450</text><text class="num" x="4" y="33">50</text></g></svg></td>
                    <td>18-Ø10&nbsp; L = 450</td>
                  </tr>
                </tbody>
              </table>
            </div>
          </div>
        </section>

        <section class="cmd">
          <div class="log"><p v-for="(h, i) in history" :key="i">{{ h }}</p></div>
          <div class="gap" />
          <div class="entry"><label for="cmdline">Command:</label><input id="cmdline" type="text"></div>
        </section>
      </main>

      <div class="rails">
        <div v-for="(col, ci) in sideBars" :key="ci" class="rail">
          <div v-for="(g, gi) in col" :key="gi" class="vbar">
            <i class="grip" />
            <template v-for="(n, ni) in g.items" :key="ni">
              <i v-if="n === '|'" class="sep" />
              <button v-else class="tool" :aria-label="n"><svg width="16" height="16" viewBox="0 0 16 16" v-html="icons[n]" /></button>
            </template>
          </div>
        </div>
      </div>
    </div>
  </div>
</template>

<style>
html, body { margin: 0; background: #e9edf3; }
</style>

<style scoped>
.app { display: flex; flex-direction: column; height: 100vh; min-height: 1100px; overflow: hidden; background: #d1d4d8; color: #000; font: 12px/16px "Liberation Sans", Arial, sans-serif; }
button { border: 0; padding: 0; margin: 0; background: none; font: inherit; color: inherit; }
svg { display: block; flex: none; }
h1, h2, p, ul { margin: 0; padding: 0; font-weight: normal; }

.titlebar { position: relative; display: flex; align-items: center; height: 21px; flex: none; border-top: 1px solid #fff; background: linear-gradient(#98b2d0, #b9d0ec); }
.titlebar h1 { flex: 1; margin-left: 8px; font: 12px/20px "Noto Sans", sans-serif; }
.winbtns { display: flex; gap: 2px; padding-right: 3px; }
.winbtns button { width: 31px; height: 17px; box-sizing: border-box; border: 1px solid #50657f; border-radius: 2px; background: linear-gradient(#c3d5ea 50%, #9db6d2 50%); box-shadow: inset 0 0 0 1px #d5e2f1; }
.winbtns .close { border-color: #40141c; background: linear-gradient(#dc9484 50%, #b8402a 50%); box-shadow: inset 0 0 0 1px #e8a89c; }
.banner { position: absolute; left: 50%; top: -1px; z-index: 2; display: flex; align-items: center; width: 1150px; height: 22px; box-sizing: border-box; margin-left: -578px; padding: 0 34px 0 29px; gap: 11px; }
.banner .shape { position: absolute; left: 0; top: 0; }
.bb { position: relative; }
.pin { display: flex; align-items: center; justify-content: center; width: 21px; height: 20px; border: 1px solid #0d2d56; border-radius: 3px; box-sizing: border-box; background: #2d5a94; }
.host { position: relative; flex: 1; padding: 2px 0 0 18px; text-align: center; color: #fff; font: 12px/22px "Noto Sans", sans-serif; }

.menu { display: flex; gap: 14px; height: 25px; flex: none; padding-left: 9px; color: #4c4c4e; }
.menu button { height: 26px; }
.bars { display: flex; height: 25px; flex: none; padding-left: 3px; }
.bar { display: flex; align-items: center; height: 24px; box-sizing: border-box; border-bottom: 1px solid #f0f2f5; background: linear-gradient(#e3e6eb, #dadde2); }
.tool { display: flex; align-items: center; justify-content: center; width: 22px; height: 22px; flex: none; }
.bar .sep { width: 2px; height: 16px; margin: 0 2px; background: linear-gradient(90deg, #bcbfc4 50%, #fff 50%); }
.grip { display: block; width: 3px; height: 16px; margin: 0 3px 0 4px; background: repeating-linear-gradient(#9a9ea5 0 2px, transparent 2px 4px); }

.props { display: flex; align-items: center; height: 28px; flex: none; padding: 0 0 3px 3px; box-sizing: border-box; }
.props .grip { margin: 0 2px; }
.combo { position: relative; display: flex; align-items: center; height: 20px; box-sizing: border-box; margin: 0 1px; border: 1px solid #fff; border-top: 2px solid #5c5c5c; border-left: 2px solid #5c5c5c; background: #fff; }
.combo + .combo { margin-left: 3px; }
.combo select { flex: 1; height: 17px; border: 0; padding: 0; appearance: none; background: none; font: inherit; color: #000; }
.combo::after { content: ""; width: 15px; height: 16px; flex: none; box-sizing: border-box; border: 1px solid #fff; border-right: 2px solid #6b6b6b; border-bottom: 2px solid #6b6b6b; background: linear-gradient(#000, #000) 3px 5px / 7px 1px no-repeat, linear-gradient(#000, #000) 4px 6px / 5px 1px no-repeat, linear-gradient(#000, #000) 5px 7px / 3px 1px no-repeat, linear-gradient(#000, #000) 6px 8px / 1px 1px no-repeat, #f0f0f0; }
.layer { width: 166px; padding-left: 8px; }
.layer select { padding-left: 1px; }
.color { width: 143px; padding-left: 2px; }
.color select { padding-left: 2px; }
.ltype { width: 143px; padding-left: 1px; }
.ltype select { padding-left: 19px; }
.lweight { width: 143px; padding-left: 5px; }
.lweight select { padding-left: 8px; }

.body { display: flex; flex: 1; min-height: 0; background: linear-gradient(#d1d4d8 2px, #e9edf3 2px); }
.side { display: flex; flex-direction: column; gap: 4px; width: 277px; flex: none; box-sizing: border-box; padding: 5px 0 2px; }
.panel { box-sizing: border-box; border: 1px solid #808285; border-left: 0; border-right: 2px solid #707275; background: #d0d4dd; border-bottom-width: 2px; }
.grow { flex: 1; }
.saved { height: 419px; flex: none; }
.panel h2 { display: flex; align-items: center; justify-content: space-between; height: 21px; padding: 0 5px 0 3px; border-bottom: 2px solid #747679; background: #bec0c3; color: #4c4c4e; font-size: 12px; }
.tree { list-style: none; padding-top: 1px; }
.tree li { display: flex; height: 16px; white-space: pre; }
.tree span { padding-left: 5px; }

.work { display: flex; flex-direction: column; flex: 1; min-width: 0; gap: 4px; padding: 5px 0 2px 4px; }
.doc { display: flex; flex-direction: column; flex: 1; min-height: 0; border: 1px solid #808285; border-right-color: #707275; background: #f4f7fd; }
.tabs { display: flex; align-items: flex-end; height: 23px; flex: none; padding-left: 3px; border-bottom: 1px solid #3e4146; background: #d1d4d8; }
.tab { position: relative; height: 20px; }
.tab span { position: absolute; left: 0; right: 0; top: 3px; text-align: center; }
.model span { left: 24px; right: 14px; }
.model { color: #e4e4e4; }
.layout { height: 21px; margin: 0 0 -1px -14px; z-index: 1; }
.layout span { top: 4px; left: 21px; right: 13px; }
.tabclose { align-self: center; margin-left: auto; padding: 3px 7px 3px 6px; border-left: 1px solid #fff; box-shadow: -1px 0 0 #b5b8bc; }
.canvas { position: relative; flex: 1; min-height: 0; overflow: hidden; margin: 4px; background: #000; }
.drawing { position: absolute; inset: 0; }
.tiny text { fill: #fff; font-size: 5px; font-weight: bold; white-space: pre; }
.tiny .cap { font-size: 6px; }
.tiny .num { font-size: 6px; }
.tiny .mid { text-anchor: middle; }
.axis text { fill: #fff; font-size: 13px; }
.cadtitle text { fill: #f00; font-size: 15px; white-space: pre; }

.sched { position: absolute; left: 393px; top: 114px; width: 342px; color: #fff; font-size: 9px; line-height: 12px; }
.sched p { height: 12px; line-height: 16px; text-align: right; margin-right: -2px; }
.sched table { width: 342px; table-layout: fixed; border-collapse: collapse; text-align: center; }
.c1 { width: 53px; }
.c2 { width: 89px; }
.c3 { width: 31px; }
.c4 { width: 168px; }
.sched td, .sched th { padding: 2px 2px 0 0; border: 1px solid #f00; font-weight: normal; white-space: nowrap; }
.sched th { padding-left: 34px; color: #f00; }
.ttl { font-size: 15px; line-height: 18px; }
.ttl + .ttl { margin-left: 38px; }
.sched .fl { font-size: 13px; }
.sched .rel { position: relative; }
.diag { position: absolute; left: 0; top: 0; z-index: 1; }
.sched .detail { padding: 0; vertical-align: top; }
.sched .spec { padding-right: 28px; }
.sched td svg { margin: 0 auto; }
.h15 { height: 15px; } .h16 { height: 16px; } .h18 { height: 18px; } .h29 { height: 29px; }
.h31 { height: 31px; } .h47 { height: 47px; } .h88 { height: 88px; } .h177 { height: 177px; }

.cmd { height: 134px; flex: none; box-sizing: border-box; display: flex; flex-direction: column; }
.log { flex: 1; padding: 4px 0 0 2px; border: 2px solid #77797c; border-right-width: 1px; border-bottom: 1px solid #ddd; background: #fff; font-size: 13px; overflow: hidden; min-height: 0; }
.log p { height: 16px; }
.gap { height: 7px; flex: none; background: #efefef; }
.entry { display: flex; align-items: center; height: 24px; flex: none; box-sizing: border-box; border: 2px solid #77797c; border-right-width: 1px; border-bottom-width: 1px; padding-left: 9px; background: #fff; font-size: 13px; }
.entry input { flex: 1; margin-left: 4px; border: 0; outline: 0; padding: 0; background: none; font: inherit; }

.rails { display: flex; gap: 1px; width: 56px; flex: none; box-sizing: border-box; padding-left: 3px; background: linear-gradient(90deg, #e9edf3 3px, #dcdcdd 3px); }
.rail { width: 25px; }
.vbar { display: flex; flex-direction: column; align-items: center; border-bottom: 1px solid #f6f7f9; margin-bottom: -1px; background: linear-gradient(90deg, #eceff4, #d9dce2); }
.vbar .grip { width: 15px; height: 2px; margin: 6px 0 2px; background: repeating-linear-gradient(90deg, #9a9ea5 0 2px, transparent 2px 4px); }
.vbar .sep { width: 16px; height: 2px; margin: 2px 0; background: linear-gradient(#b5b8bd 50%, #fff 50%); }
</style>
